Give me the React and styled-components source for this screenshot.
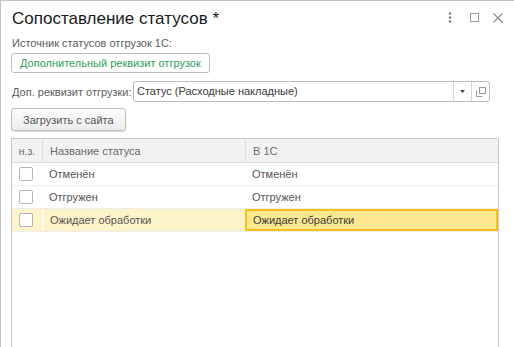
import React from 'react';
import styled, { createGlobalStyle } from 'styled-components';

const GlobalStyle = createGlobalStyle`
  html, body {
    margin: 0;
    padding: 0;
    background: #fff;
  }
  body {
    font-family: "Liberation Sans", Arial, sans-serif;
    font-size: 11px;
    color: #555;
  }
`;

const Window = styled.div`
  box-sizing: border-box;
  width: 514px;
  height: 347px;
  border-top: 1px solid #c4c4c4;
  border-left: 1px solid #c4c4c4;
  background: #fff;
  display: flex;
  flex-direction: column;
  overflow: hidden;
`;

const TitleBar = styled.div`
  display: flex;
  align-items: center;
  height: 33px;
  padding: 0 10px 0 11px;
`;

const Title = styled.h1`
  flex: 1;
  margin: 0;
  font-size: 17px;
  font-weight: normal;
  color: #1a1a1a;
  padding-top: 2px;
`;

const TitleButtons = styled.div`
  display: flex;
  align-items: center;
  gap: 12px;
`;

const IconBtn = styled.div`
  width: 12px;
  height: 14px;
  display: flex;
  align-items: center;
  justify-content: center;
`;

const Body = styled.div`
  flex: 1;
  display: flex;
  flex-direction: column;
  padding: 0 0 0 10px;
`;

const Label = styled.div`
  font-size: 11px;
  color: #5c5c5c;
  margin-top: 2px;
  height: 14px;
  line-height: 14px;
  padding-left: 1px;
`;

const Button = styled.button`
  box-sizing: border-box;
  align-self: flex-start;
  height: ${p => p.$tall ? '23px' : '20px'};
  padding: 0 ${p => p.$tall ? '11px' : '8px'};
  font-family: inherit;
  font-size: 11px;
  color: ${p => p.$accent ? '#2e9e5e' : '#555'};
  background: ${p => p.$tall ? 'linear-gradient(#fdfdfd, #ececec)' : '#fff'};
  border: 1px solid #bdbdbd;
  border-radius: 3px;
  box-shadow: ${p => p.$tall ? '0 1px 1px rgba(0,0,0,0.15)' : 'none'};
  cursor: pointer;
`;

const FieldRow = styled.div`
  display: flex;
  align-items: center;
  margin-top: 8px;
  height: 21px;
  padding-left: 1px;
`;

const FieldLabel = styled.span`
  font-size: 11px;
  color: #5c5c5c;
  width: 121px;
  white-space: nowrap;
`;

const Select = styled.div`
  box-sizing: border-box;
  width: 357px;
  height: 21px;
  display: flex;
  border: 1px solid #bdbdbd;
  border-radius: 3px;
  background: #fff;
`;

const SelectValue = styled.div`
  flex: 1;
  padding-left: 3px;
  line-height: 19px;
  font-size: 11px;
  color: #3a3a3a;
`;

const SelectBtn = styled.div`
  width: 17px;
  border-left: 1px solid #d6d6d6;
  display: flex;
  align-items: center;
  justify-content: center;
`;

const Toolbar = styled.div`
  margin-top: 6px;
  display: flex;
`;

const Table = styled.div`
  box-sizing: border-box;
  margin-top: 7px;
  width: 488px;
  flex: 1;
  border: 1px solid #c8c8c8;
  border-bottom: none;
`;

const Row = styled.div`
  display: grid;
  grid-template-columns: 30px 203px 1fr;
  height: ${p => p.$head ? '23px' : '22px'};
  background: ${p => p.$head ? '#f2f2f2' : '#fff'};
  border-bottom: 1px solid ${p => p.$head ? '#dcdcdc' : '#ececec'};
`;

const Cell = styled.div`
  box-sizing: border-box;
  display: flex;
  align-items: center;
  justify-content: ${p => p.$center ? 'center' : 'flex-start'};
  padding-left: ${p => p.$current ? '6px' : p.$center ? '0' : '7px'};
  font-size: ${p => p.$small ? '10.5px' : '11px'};
  color: ${p => p.$head ? '#6a6a6a' : p.$current ? '#3a3a3a' : '#555'};
  white-space: nowrap;
  overflow: hidden;
  border-left: ${p => p.$sep ? '1px solid #dcdcdc' : p.$gap ? '1px solid #fff' : 'none'};
  background: ${p => p.$current ? '#fde78f' : p.$selected ? '#fef4c9' : 'transparent'};
  ${p => p.$current && 'border: 2px solid #f6c21a;'}
`;

const Check = styled.span`
  box-sizing: border-box;
  width: 14px;
  height: 14px;
  margin-right: 2px;
  border: 1px solid #b4b4b4;
  border-radius: 2px;
  background: #fff;
`;

const rows = [
  { name: 'Отменён', value: 'Отменён' },
  { name: 'Отгружен', value: 'Отгружен' },
  { name: 'Ожидает обработки', value: 'Ожидает обработки', current: true },
];

export default function App() {
  return (
    <>
      <GlobalStyle />
      <Window>
        <TitleBar>
          <Title>Сопоставление статусов *</Title>
          <TitleButtons>
            <IconBtn>
              <svg width="4" height="11" viewBox="0 0 4 11">
                <circle cx="2" cy="1.5" r="1.2" fill="#777" />
                <circle cx="2" cy="5.5" r="1.2" fill="#777" />
                <circle cx="2" cy="9.5" r="1.2" fill="#777" />
              </svg>
            </IconBtn>
            <IconBtn>
              <svg width="9" height="9" viewBox="0 0 9 9">
                <rect x="0.5" y="0.5" width="8" height="8" fill="none" stroke="#999" />
              </svg>
            </IconBtn>
            <IconBtn>
              <svg width="10" height="10" viewBox="0 0 10 10">
                <path d="M0.5 0.5 L9.5 9.5 M9.5 0.5 L0.5 9.5" stroke="#888" strokeWidth="1.1" />
              </svg>
            </IconBtn>
          </TitleButtons>
        </TitleBar>
        <Body>
          <Label>Источник статусов отгрузок 1С:</Label>
          <Button $accent style={{ marginTop: 3 }}>Дополнительный реквизит отгрузок</Button>
          <FieldRow>
            <FieldLabel>Доп. реквизит отгрузки:</FieldLabel>
            <Select>
              <SelectValue>Статус (Расходные накладные)</SelectValue>
              <SelectBtn>
                <svg width="5" height="3" viewBox="0 0 5 3">
                  <path d="M0 0 H5 L2.5 3 Z" fill="#444" />
                </svg>
              </SelectBtn>
              <SelectBtn>
                <svg width="10" height="10" viewBox="0 0 10 10">
                  <rect x="3.5" y="0.5" width="6" height="6" fill="none" stroke="#999" />
                  <path d="M0.5 3.5 V9.5 H6.5" fill="none" stroke="#999" />
                </svg>
              </SelectBtn>
            </Select>
          </FieldRow>
          <Toolbar>
            <Button $tall>Загрузить с сайта</Button>
          </Toolbar>
          <Table>
            <Row $head>
              <Cell $head $center $small>н.з.</Cell>
              <Cell $head $sep>Название статуса</Cell>
              <Cell $head $sep>В 1С</Cell>
            </Row>
            {rows.map(r => (
              <Row key={r.name}>
                <Cell $center $selected={r.current}><Check /></Cell>
                <Cell $gap={r.current} $selected={r.current}>{r.name}</Cell>
                <Cell $current={r.current}>{r.value}</Cell>
              </Row>
            ))}
          </Table>
        </Body>
      </Window>
    </>
  );
}
